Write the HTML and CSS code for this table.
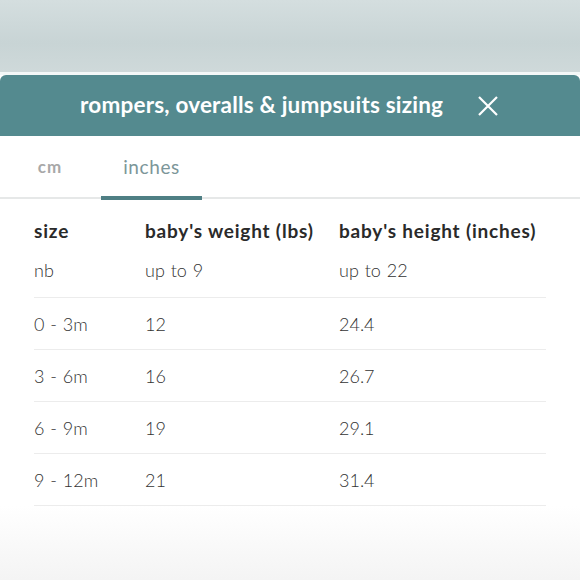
FILE: index.html
```html
<!DOCTYPE html>
<html>
<head>
<meta charset="utf-8">
<link rel="stylesheet" href="styles.css">
</head>
<body>
<div class="backdrop"></div>
<div class="modal">
  <div class="modal-header">
    <h1 class="title">rompers, overalls &amp; jumpsuits sizing</h1>
    <button class="close" aria-label="close">
      <svg width="22" height="22" viewBox="0 0 22 22"><path d="M2 2L20 20M20 2L2 20" stroke="#fff" stroke-width="2.2" fill="none"/></svg>
    </button>
  </div>
  <div class="tabs">
    <div class="tab">cm</div>
    <div class="tab active">inches</div>
  </div>
  <div class="table">
    <div class="row head"><span>size</span><span>baby's weight (lbs)</span><span>baby's height (inches)</span></div>
    <div class="row first"><span>nb</span><span>up to 9</span><span>up to 22</span></div>
    <div class="row"><span>0 - 3m</span><span>12</span><span>24.4</span></div>
    <div class="row"><span>3 - 6m</span><span>16</span><span>26.7</span></div>
    <div class="row"><span>6 - 9m</span><span>19</span><span>29.1</span></div>
    <div class="row"><span>9 - 12m</span><span>21</span><span>31.4</span></div>
  </div>
  <div class="fade"></div>
</div>
</body>
</html>
```
FILE: styles.css
```css
html, body { margin: 0; padding: 0; }
body {
  width: 580px;
  height: 580px;
  overflow: hidden;
  font-family: Lato, "Noto Sans", sans-serif;
  background: #fff;
}
.backdrop {
  height: 72px;
  background: linear-gradient(180deg, #d4dedf 0%, #c8d4d5 60%, #cfd9da 100%);
  border-bottom: 3px solid #f4f8f8;
}
.modal {
  background: #fff;
}
.modal-header {
  height: 61px;
  background: #548a8f;
  border-radius: 6px 6px 0 0;
  display: flex;
  align-items: center;
  position: relative;
}
.title {
  margin: 0 0 0 80px;
  color: #fff;
  font-size: 22.5px;
  font-weight: 700;
  letter-spacing: 0.2px;
  padding-bottom: 2px;
}
.close {
  position: absolute;
  right: 81px;
  top: 20px;
  background: none;
  border: 0;
  padding: 0;
  width: 22px;
  height: 22px;
}
.tabs {
  display: flex;
  height: 61px;
  border-bottom: 2px solid #e6e8e8;
  padding-left: 17px;
}
.tab {
  display: flex;
  align-items: center;
  justify-content: center;
  font-size: 17px;
  letter-spacing: 1px;
  color: #a8a8a8;
  font-weight: 700;
  width: 66px;
  margin-right: 18px;
}
.tab.active {
  width: 101px;
  font-size: 19px;
  letter-spacing: 0.6px;
  color: #7c9699;
  font-weight: 400;
  border-bottom: 4px solid #4f7f84;
  margin-bottom: -3px;
  box-sizing: border-box;
  padding-top: 1px;
}
.table {
  margin: 0 34px;
  padding-top: 15px;
}
.row {
  display: grid;
  grid-template-columns: 111px 194px 1fr;
  height: 51px;
  align-items: center;
  border-bottom: 1px solid #ececec;
  font-size: 18px;
  word-spacing: 1px;
  color: #333;
  font-weight: 300;
}
.row.head {
  height: 32px;
  border-bottom: 0;
  font-size: 19px;
  letter-spacing: 0.8px;
  word-spacing: 0;
  font-weight: 700;
  color: #2a2a2a;
}
.row.first {
  height: 52px;
  padding-bottom: 4px;
  box-sizing: border-box;
}
.fade {
  height: 80px;
  background: linear-gradient(180deg, #ffffff 0%, #f3f3f3 100%);
}
```
